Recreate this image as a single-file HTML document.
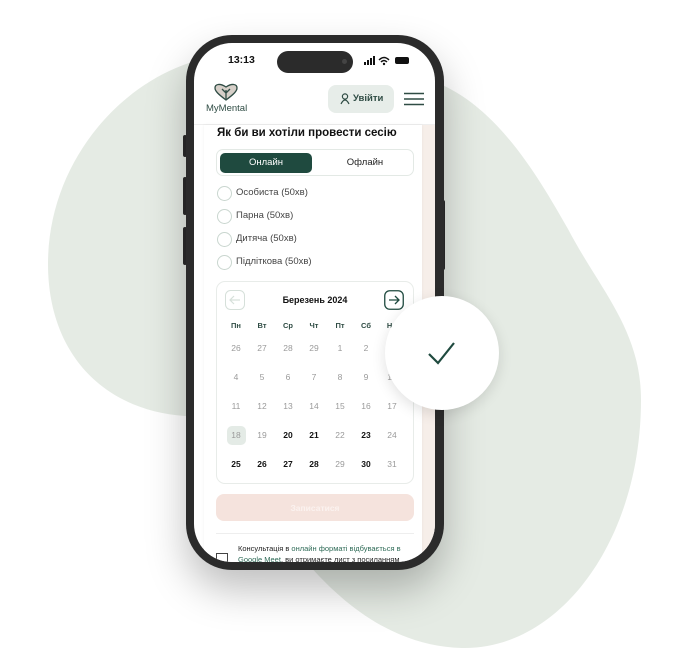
<!DOCTYPE html>
<html><head><meta charset="utf-8"><style>
*{margin:0;padding:0;box-sizing:border-box}
body{width:686px;height:669px;background:#fff;position:relative;overflow:hidden;font-family:"Liberation Sans","DejaVu Sans",sans-serif}
.abs{position:absolute}
.phone{left:186px;top:35px;width:258px;height:535px;border-radius:46px;background:#2b2b2b;box-shadow:0 20px 40px rgba(0,0,0,.25)}
.screen{left:194px;top:43px;width:241px;height:519px;border-radius:38px;background:#fff;overflow:hidden}
.btnside{background:#2b2b2b;width:4px;border-radius:2px}
.t{position:absolute;white-space:nowrap}
.radio{position:absolute;width:15px;height:15px;border:1.5px solid #c9d6cf;border-radius:50%}
.cal div{position:absolute;width:26px;text-align:center;font-size:8.5px;color:#9a9a9a}
.cal .b{color:#111;font-weight:bold}
.cal .h{color:#2f4c44;font-weight:bold;font-size:7.5px}
</style></head><body>
<svg class="abs" style="left:0;top:0" width="686" height="669"><path d="M48,264 C48,150 140,60 230,55 C320,50 400,60 440,84 C500,110 540,180 568,229 C600,290 641,330 641,400 C641,540 560,650 462,648 C390,646 340,600 308,564 C280,530 250,420 185,416 C100,410 48,350 48,264Z" fill="#e5ebe4"/></svg>
<div class="abs btnside" style="left:183px;top:135px;height:22px"></div>
<div class="abs btnside" style="left:183px;top:177px;height:38px"></div>
<div class="abs btnside" style="left:183px;top:227px;height:38px"></div>
<div class="abs btnside" style="left:441px;top:200px;height:70px"></div>
<div class="abs phone"></div>
<div class="abs screen">
 <div class="t" style="left:34px;top:11px;font-size:10.5px;font-weight:bold;color:#111">13:13</div>
 <div class="abs" style="left:83px;top:8px;width:76px;height:22px;border-radius:11px;background:#2b2b2b"></div>
 <div class="abs" style="left:148px;top:16px;width:5px;height:5px;border-radius:50%;background:#444"></div>
 <svg class="abs" style="left:170px;top:13px" width="46" height="10"><rect x="0" y="6" width="2" height="3" fill="#111"/><rect x="3" y="4" width="2" height="5" fill="#111"/><rect x="6" y="2" width="2" height="7" fill="#111"/><rect x="9" y="0" width="2" height="9" fill="#111"/><path d="M15,4 Q20,-1 25,4 M17,6 Q20,3 23,6" stroke="#111" stroke-width="1.5" fill="none"/><circle cx="20" cy="8" r="1.2" fill="#111"/><rect x="31" y="1" width="14" height="7" rx="2" fill="#111"/></svg>
 <svg class="abs" style="left:20px;top:40px" width="24" height="18"><path d="M12,17 C4,11 1,8 1,5 C1,1 6,0 12,4 C18,0 23,1 23,5 C23,8 20,11 12,17Z" fill="#d6cfc8" stroke="#2f4c44" stroke-width="1.3"/><path d="M12,16 V7 M12,10 L8,6 M12,10 L16,6" stroke="#2f4c44" stroke-width="1.3" fill="none"/></svg>
 <div class="t" style="left:12px;top:60px;font-size:9.5px;color:#2f4c44">MyMental</div>
 <div class="abs" style="left:134px;top:42px;width:66px;height:28px;border-radius:8px;background:#e7ede9"></div>
 <svg class="abs" style="left:146px;top:50px" width="10" height="12"><circle cx="5" cy="3.5" r="2.6" stroke="#2f4c44" stroke-width="1.2" fill="none"/><path d="M1,11 Q5,3 9,11" stroke="#2f4c44" stroke-width="1.2" fill="none"/></svg>
 <div class="t" style="left:159px;top:50px;font-size:9.5px;font-weight:bold;color:#2f4c44">Увійти</div>
 <svg class="abs" style="left:210px;top:49px" width="20" height="14"><path d="M0,1.5H20M0,7H20M0,12.5H20" stroke="#2f4c44" stroke-width="1.6"/></svg>
 <div class="abs" style="left:0;top:81px;width:241px;height:1px;background:#eee"></div>
 <div class="abs" style="left:228px;top:82px;width:13px;height:437px;background:#f6eee9"></div>
 <div class="abs" style="left:10px;top:82px;width:218px;height:437px;background:#fff;box-shadow:0 0 3px rgba(0,0,0,.06)"></div>
 <div class="t" style="left:23px;top:84px;font-size:11.5px;font-weight:bold;color:#111">Як би ви хотіли провести сесію</div>
 <div class="abs" style="left:22px;top:106px;width:198px;height:27px;border:1px solid #e3e9e5;border-radius:7px"></div>
 <div class="abs" style="left:26px;top:110px;width:92px;height:20px;border-radius:5px;background:#1f4a3f"></div>
 <div class="t" style="left:26px;top:114px;width:92px;text-align:center;font-size:9.5px;color:#fff">Онлайн</div>
 <div class="t" style="left:125px;top:114px;width:92px;text-align:center;font-size:9.5px;color:#222">Офлайн</div>
 <div class="radio" style="left:23px;top:143px"></div><div class="t" style="left:42px;top:144px;font-size:9.5px;color:#444">Особиста (50хв)</div>
 <div class="radio" style="left:23px;top:166px"></div><div class="t" style="left:42px;top:167px;font-size:9.5px;color:#444">Парна (50хв)</div>
 <div class="radio" style="left:23px;top:189px"></div><div class="t" style="left:42px;top:190px;font-size:9.5px;color:#444">Дитяча (50хв)</div>
 <div class="radio" style="left:23px;top:212px"></div><div class="t" style="left:42px;top:213px;font-size:9.5px;color:#444">Підліткова (50хв)</div>
 <div class="abs" style="left:22px;top:238px;width:198px;height:203px;border:1px solid #e8ece9;border-radius:9px"></div>
 <svg class="abs" style="left:31px;top:247px" width="20" height="20"><rect x="0.5" y="0.5" width="19" height="19" rx="5" stroke="#d6e0da" fill="none"/><path d="M15,10H5M9,6L5,10L9,14" stroke="#d6e0da" stroke-width="1.2" fill="none"/></svg>
 <div class="t" style="left:22px;top:252px;width:198px;text-align:center;font-size:9px;font-weight:bold;color:#111">Березень 2024</div>
 <svg class="abs" style="left:190px;top:247px" width="20" height="20"><rect x="0.75" y="0.75" width="18.5" height="18.5" rx="5" stroke="#1f4a3f" stroke-width="1.3" fill="none"/><path d="M5,10H15M11,6L15,10L11,14" stroke="#1f4a3f" stroke-width="1.3" fill="none"/></svg>
 <div class="cal">
  <div class="h" style="left:29px;top:278px">Пн</div><div class="h" style="left:55px;top:278px">Вт</div><div class="h" style="left:81px;top:278px">Ср</div><div class="h" style="left:107px;top:278px">Чт</div><div class="h" style="left:133px;top:278px">Пт</div><div class="h" style="left:159px;top:278px">Сб</div><div class="h" style="left:185px;top:278px">Нд</div>
  <div style="left:29px;top:300px">26</div><div style="left:55px;top:300px">27</div><div style="left:81px;top:300px">28</div><div style="left:107px;top:300px">29</div><div style="left:133px;top:300px">1</div><div style="left:159px;top:300px">2</div><div style="left:185px;top:300px">3</div>
  <div style="left:29px;top:329px">4</div><div style="left:55px;top:329px">5</div><div style="left:81px;top:329px">6</div><div style="left:107px;top:329px">7</div><div style="left:133px;top:329px">8</div><div style="left:159px;top:329px">9</div><div style="left:185px;top:329px">10</div>
  <div style="left:29px;top:358px">11</div><div style="left:55px;top:358px">12</div><div style="left:81px;top:358px">13</div><div style="left:107px;top:358px">14</div><div style="left:133px;top:358px">15</div><div style="left:159px;top:358px">16</div><div style="left:185px;top:358px">17</div>
  <span class="abs" style="left:33px;top:383px;width:19px;height:19px;border-radius:5px;background:#e4ebe6"></span>
  <div style="left:29px;top:387px">18</div><div style="left:55px;top:387px">19</div><div class="b" style="left:81px;top:387px">20</div><div class="b" style="left:107px;top:387px">21</div><div style="left:133px;top:387px">22</div><div class="b" style="left:159px;top:387px">23</div><div style="left:185px;top:387px">24</div>
  <div class="b" style="left:29px;top:416px">25</div><div class="b" style="left:55px;top:416px">26</div><div class="b" style="left:81px;top:416px">27</div><div class="b" style="left:107px;top:416px">28</div><div style="left:133px;top:416px">29</div><div class="b" style="left:159px;top:416px">30</div><div style="left:185px;top:416px">31</div>
 </div>
 <div class="abs" style="left:22px;top:451px;width:198px;height:27px;border-radius:8px;background:#f5e3dd"></div>
 <div class="t" style="left:22px;top:460px;width:198px;text-align:center;font-size:8.5px;font-weight:bold;color:#fbf2ef">Записатися</div>
 <div class="abs" style="left:22px;top:490px;width:198px;height:1px;background:#eee"></div>
 <svg class="abs" style="left:22px;top:510px" width="12" height="10"><rect x="0.5" y="0.5" width="11" height="9" stroke="#444" fill="none"/></svg>
 <div class="t" style="left:44px;top:501px;font-size:7.5px;color:#222">Консультація в <span style="color:#2f6b57">онлайн форматі відбувається в</span></div>
 <div class="t" style="left:44px;top:512px;font-size:7.5px;color:#222"><span style="color:#2f6b57">Google Meet</span>, ви отримаєте лист з посиланням</div>
</div>
<div class="abs" style="left:385px;top:296px;width:114px;height:114px;border-radius:50%;background:#fff;box-shadow:0 4px 14px rgba(0,0,0,.12)"></div>
<svg class="abs" style="left:427px;top:340px" width="30" height="26"><path d="M2,14 L11,23 L27,3" stroke="#1f4a3f" stroke-width="2.2" fill="none"/></svg>
</body></html>
